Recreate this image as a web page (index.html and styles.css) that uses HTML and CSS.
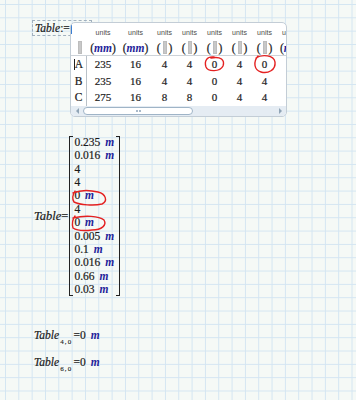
FILE: index.html
```html
<!DOCTYPE html>
<html>
<head>
<meta charset="utf-8">
<link rel="stylesheet" href="styles.css">
</head>
<body>
<div class="def">
  <div class="lhs"><span class="var">Table</span><span class="op">:=</span></div>
  <div class="widget">
    <div class="tbl">
      <div class="rh0"></div>
      <div class="u">units</div><div class="u">units</div><div class="u">units</div><div class="u">units</div><div class="u">units</div><div class="u">units</div><div class="u">units</div><div class="u">units</div>

      <div class="h rh1"><span class="ph"></span></div>
      <div class="h">(<i class="unit">mm</i>)</div>
      <div class="h">(<i class="unit">mm</i>)</div>
      <div class="h">(<span class="ph"></span>)</div>
      <div class="h">(<span class="ph"></span>)</div>
      <div class="h">(<span class="ph"></span>)</div>
      <div class="h">(<span class="ph"></span>)</div>
      <div class="h">(<span class="ph"></span>)</div>
      <div class="h hl">(<i class="unit">m</i></div>

      <div class="rh"><span class="tcaret"></span>A</div>
      <div class="c">235</div><div class="c">16</div><div class="c">4</div><div class="c">4</div><div class="c">0</div><div class="c">4</div><div class="c">0</div><div class="c"></div>

      <div class="rh">B</div>
      <div class="c">235</div><div class="c">16</div><div class="c">4</div><div class="c">4</div><div class="c">0</div><div class="c">4</div><div class="c">4</div><div class="c"></div>

      <div class="rh">C</div>
      <div class="c">275</div><div class="c">16</div><div class="c">8</div><div class="c">8</div><div class="c">0</div><div class="c">4</div><div class="c">4</div><div class="c"></div>
    </div>
    <div class="sb">
      <span class="arr-l"></span>
      <span class="thumb"><span class="dot"></span><span class="dot"></span></span>
      <span class="sp"></span>
      <span class="arr-r"></span>
    </div>
  </div>
</div>

<div class="mat-sec">
  <div class="mlabel"><span class="var">Table</span>=</div>
  <div class="matrix">
    <div class="br-l"></div>
    <div class="mcol">
      <div>0.235 <i class="unit">m</i></div>
      <div>0.016 <i class="unit">m</i></div>
      <div>4</div>
      <div>4</div>
      <div>0 <i class="unit">m</i></div>
      <div>4</div>
      <div>0 <i class="unit">m</i></div>
      <div>0.005 <i class="unit">m</i></div>
      <div>0.1 <i class="unit">m</i></div>
      <div>0.016 <i class="unit">m</i></div>
      <div>0.66 <i class="unit">m</i></div>
      <div>0.03 <i class="unit">m</i></div>
    </div>
    <div class="br-r"></div>
  </div>
</div>

<div class="res r1"><span class="var">Table</span><sub class="sub">4,0</sub>=0 <i class="unit">m</i></div>
<div class="res r2"><span class="var">Table</span><sub class="sub">6,0</sub>=0 <i class="unit">m</i></div>

<svg class="marks" width="356" height="400" viewBox="0 0 356 400">
  <path d="M214 57 C207 56 204 61 206 67 C208 72 220 72 223 66 C225 60 221 56 211 58"/>
  <path d="M256 58 C262 54 274 55 275 62 C276 70 268 74 261 72 C254 70 253 62 258 56"/>
  <path d="M73 193 C80 190 90 190 98 192 C106 194 108 201 102 204 C94 206 80 205 74 202 C72 199 72 196 75 191"/>
  <path d="M73 218 C85 215 99 216 104 220 C107 225 102 230 92 230 C84 231 76 230 73 228 C72 224 72 220 75 216"/>
</svg>
</body>
</html>
```
FILE: styles.css
```css
* { box-sizing: border-box; margin: 0; padding: 0; }
html, body { width: 356px; height: 400px; overflow: hidden; }
body {
  position: relative;
  background-color: #f5f9f6;
  background-image:
    linear-gradient(to right, #d3e5f2 1px, transparent 1px),
    linear-gradient(to bottom, #d3e5f2 1px, transparent 1px);
  background-size: 13.333px 13.333px;
  background-position: 5px 4px;
  font-family: "Liberation Serif", "Times New Roman", serif;
  color: #1a1a1a;
  -webkit-text-stroke: 0.2px currentColor;
}
.var { font-style: italic; }
.unit { color: #1f1f9a; font-style: italic; font-weight: bold; -webkit-text-stroke: 0; }

/* definition */
.def { display: flex; align-items: flex-start; padding: 20px 0 0 32px; }
.lhs {
  width: 60px; height: 16px;
  border: 1px dashed #a2b1bf;
  font-size: 11.5px; line-height: 14px;
  padding-left: 2px; white-space: nowrap;
}
.widget {
  position: relative;
  margin: 2px 0 0 -22px;
  width: 217px; height: 95px;
  border: 1px solid #c3cdd6; border-radius: 5px;
  background: #fff;
  overflow: hidden;
  display: flex; flex-direction: column;
}
.widget::before {
  content: ""; position: absolute; left: 0; top: 2px;
  width: 1px; height: 9px; background: #3b7fd4;
}
.tbl {
  display: grid;
  grid-template-columns: 16px 32px 33px repeat(6, 25px);
  grid-template-rows: 17px 16px repeat(3, 16.5px);
  width: max-content; flex: none;
}
.u {
  display: flex; align-items: flex-end; justify-content: center;
  padding-bottom: 3px;
  font-family: "Liberation Sans", Arial, sans-serif;
  font-size: 7px; line-height: 8px; color: #4a4a4a;
  -webkit-text-stroke: 0;
}
.h {
  display: flex; align-items: center; justify-content: center;
  border-bottom: 1px solid #cdd3d9;
  font-size: 11.5px; white-space: nowrap;
}
.hl { justify-content: flex-start; padding-left: 3px; }
.rh1 { justify-content: flex-start; padding-left: 7px; }
.ph { display: inline-block; width: 4px; height: 13px; background: #c8c8c8; margin: 0 2px; border: 1px solid #bdbdbd; }
.rh1 .ph { margin: 0; }
.rh {
  border-right: 1px solid #b9c1c8;
  font-size: 11.5px; line-height: 16px;
  display: flex; align-items: center; justify-content: center;
}
.tcaret { display: inline-block; width: 1px; height: 11px; background: #222; }
.c { text-align: center; font-size: 11px; line-height: 16px; }

.sb {
  flex: 1; margin-top: auto;
  background: #e5ecf3;
  display: flex; align-items: center;
  padding: 0 4px 0 5px;
}
.arr-l { width: 0; height: 0; border-top: 3px solid transparent; border-bottom: 3px solid transparent; border-right: 3px solid #90a4b6; }
.arr-r { width: 0; height: 0; border-top: 3px solid transparent; border-bottom: 3px solid transparent; border-left: 3px solid #90a4b6; }
.thumb {
  margin-left: 4px; width: 110px; height: 8px;
  background: #fff; border: 1px solid #9fb4c7; border-radius: 4px;
  display: flex; align-items: center; justify-content: center; gap: 1px;
}
.dot { width: 2px; height: 2px; background: #a9bacb; }
.sp { flex: 1; }

/* matrix */
.mat-sec { display: flex; align-items: center; margin-top: 19px; padding-left: 34px; }
.mlabel { font-size: 12.5px; margin-right: 1px; white-space: nowrap; }
.matrix { display: flex; }
.br-l, .br-r { width: 4px; border: 1.5px solid #222; }
.br-l { border-right: none; }
.br-r { border-left: none; }
.mcol { font-size: 11.5px; line-height: 13.36px; width: 43px; padding-left: 1px; white-space: nowrap; }
.mcol .unit { margin-left: 2px; }

/* results */
.res { padding-left: 34px; font-size: 11.5px; line-height: 16px; white-space: nowrap; }
.res .unit { margin-left: 2px; }
.r1 { margin-top: 31px; }
.r2 { margin-top: 11px; }
.sub { font-size: 7px; line-height: 0; vertical-align: -5px; letter-spacing: 1.2px; margin: 0 1px; -webkit-text-stroke: 0.1px currentColor; }

.marks { position: absolute; left: 0; top: 0; pointer-events: none; }
.marks path { fill: none; stroke: #e42121; stroke-width: 1.4; stroke-linecap: round; }
```
